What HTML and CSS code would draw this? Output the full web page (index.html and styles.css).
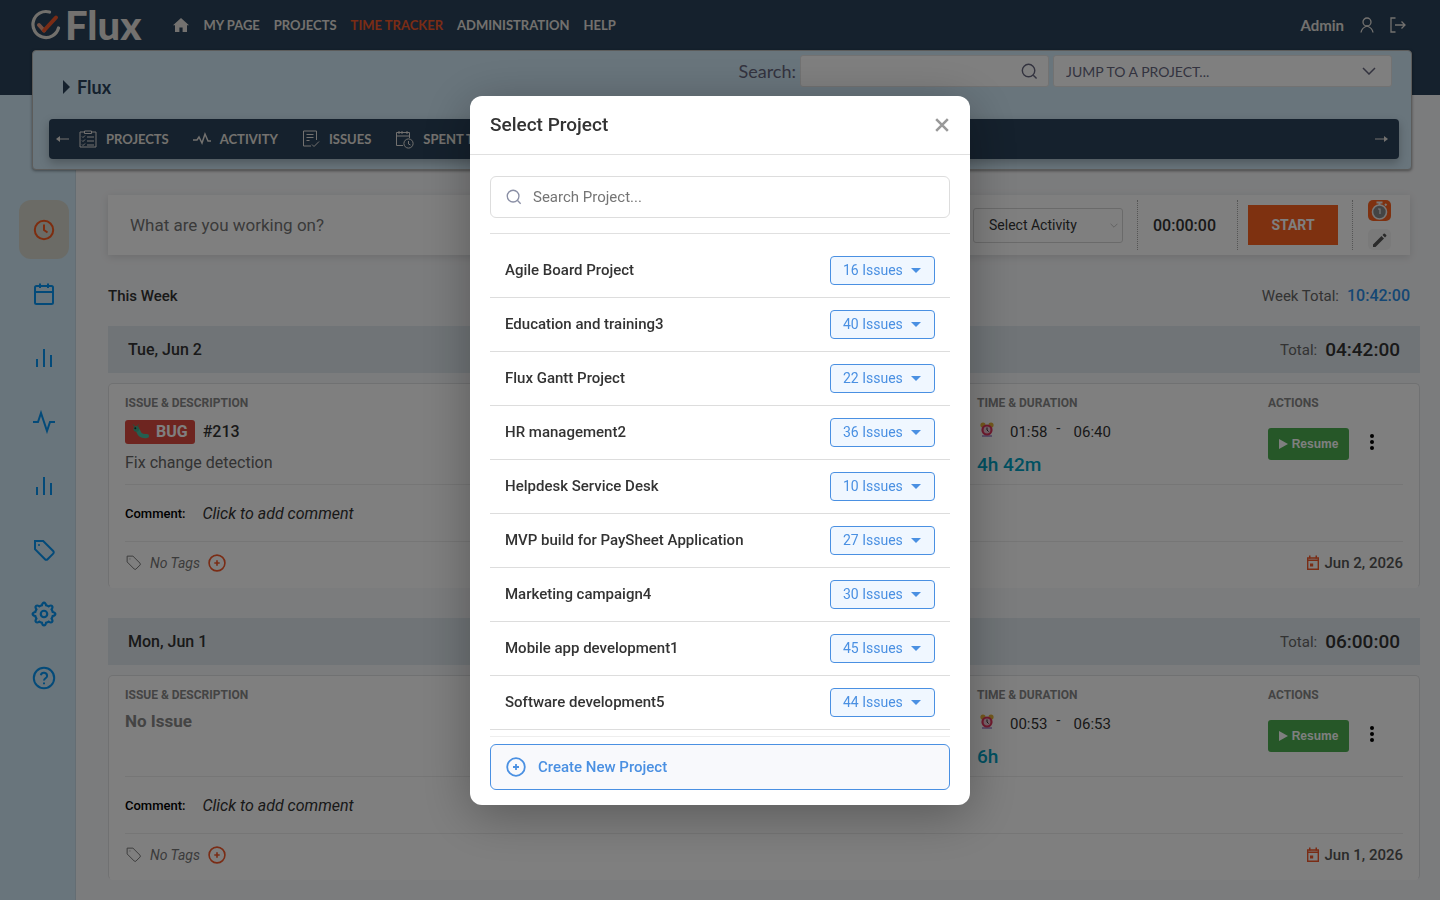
FILE: index.html
```html
<!DOCTYPE html>
<html lang="en">

<head>
  <meta charset="utf-8">
  <meta name="viewport" content="width=device-width, initial-scale=1">
  <title>Time Tracker - Flux</title>
  <link rel="stylesheet" href="styles.css">
</head>

<body>
  <!-- shared icons -->
  <svg class="sprite" aria-hidden="true">
    <symbol id="i-search" viewBox="0 0 18 18"><circle cx="8" cy="8" r="6.6"/><path d="M13 13l3.5 3.5"/></symbol>
    <symbol id="i-chevron" viewBox="0 0 14 8"><path d="M1 1l6 6 6-6"/></symbol>
    <symbol id="i-bars" viewBox="0 0 24 24"><path d="M19 21V9M12 21V3M5 21v-8"/></symbol>
    <symbol id="i-tag" viewBox="0 0 24 24"><path d="M3 3h8.2l10 10a1.8 1.8 0 0 1 0 2.6l-5.6 5.6a1.8 1.8 0 0 1-2.6 0L3 11.200z"/><path d="M7 7h.01" stroke-linecap="round"/></symbol>
    <symbol id="i-plus" viewBox="0 0 20 20"><circle cx="10" cy="10" r="8.800"/><path d="M10 7v6M7 10h6"/></symbol>
    <symbol id="i-date" viewBox="0 0 14 16"><path d="M1.700 3h10.600v11.300H1.700z" fill="none" stroke="currentColor" stroke-width="1.400"/><path d="M1 4.500h12v1.500H1zM3 .5h1.500v3H3zM9.500.5H11v3H9.500zM4 8.500h3.200v3H4z"/></symbol>
    <symbol id="i-alarm" viewBox="0 0 14 16">
      <path d="M2 13h10v2H2z" fill="#b9a3d8"/>
      <circle cx="3" cy="3" r="2.600" fill="#e8b33a"/><circle cx="11" cy="3" r="2.600" fill="#e8b33a"/>
      <circle cx="7" cy="8" r="5.600" fill="#e2365f"/><circle cx="7" cy="8" r="3.400" fill="#f3c9d8"/>
      <path d="M7 5.500V8l1.600 1.600" fill="none" stroke="#333" stroke-width="1"/>
    </symbol>
    <symbol id="i-bug" viewBox="0 0 18 16">
      <path d="M4 5C7 5.500 6 9 8.500 10.800s4.500 1.200 6.500 1.200" fill="none" stroke="#48bfa0" stroke-width="4.200" stroke-linecap="round"/>
      <circle cx="4.300" cy="4.800" r="2.900" fill="#3cae8c"/><circle cx="3.300" cy="4.300" r="1" fill="#20302a"/>
      <path d="M2.500 2.500L1.200.5M5.500 2L6.500.5" stroke="#38a87c" stroke-width="1"/>
    </symbol>
  </svg>

  <header class="topbar">
    <a class="logo" href="#">
      <svg width="30" height="32" viewBox="0 0 30 32" fill="none" stroke-linecap="round">
        <path d="M18.500 3A13 13 0 1 0 27.500 19" stroke="#e4e0d9" stroke-width="3.200"/>
        <path d="M8 16l5 5.500" stroke="#e9a087" stroke-width="4"/>
        <path d="M13 21.500L25 8.500" stroke="#f4592a" stroke-width="4"/>
      </svg>
      <span>Flux</span>
    </a>
    <nav class="main-nav">
      <a class="home" href="#" aria-label="Home"><svg width="16" height="14" viewBox="0 0 16 14"><path d="M8 0l8 7.200h-2V14H9.600V9.500H6.400V14H2V7.200H0z" fill="currentColor"/></svg></a>
      <a href="#">MY PAGE</a>
      <a href="#">PROJECTS</a>
      <a class="active" href="#">TIME TRACKER</a>
      <a href="#">ADMINISTRATION</a>
      <a href="#">HELP</a>
    </nav>
    <div class="account">
      <a href="#">Admin</a>
      <a class="icon" href="#" aria-label="My account"><svg width="14" height="16" viewBox="0 0 14 16"><circle cx="7" cy="5" r="4"/><path d="M1 15.500c.5-3.500 3-5.500 6-6.500 3 1 5.500 3 6 6.500"/></svg></a>
      <a class="icon" href="#" aria-label="Sign out"><svg width="16" height="16" viewBox="0 0 16 16"><path d="M5.500 1H1v14h4.500M5 8h10M11.500 4.500L15 8l-3.500 3.500"/></svg></a>
    </div>
  </header>

  <section class="panel">
    <div class="panel-head">
      <h1><span class="caret-right"></span>Flux</h1>
      <form class="quick">
        <label for="q">Search:</label>
        <div class="quick-box search-box">
          <input type="text" id="q">
          <svg width="17" height="17"><use href="#i-search"/></svg>
        </div>
        <div class="quick-box jump-box">
          <select aria-label="Jump to a project">
            <option>JUMP TO A PROJECT...</option>
          </select>
          <svg width="14" height="8"><use href="#i-chevron"/></svg>
        </div>
      </form>
    </div>
    <nav class="sub-nav">
      <button type="button" class="arrow" aria-label="Previous"><svg width="13" height="8" viewBox="0 0 13 8"><path d="M2 4h11"/><path d="M0 4l4-3v6z" class="fill"/></svg></button>
      <a href="#"><svg width="18" height="18" viewBox="0 0 18 18"><path d="M5 2H1v15h16V2h-4M5.500 1h7v2.500h-7zM3 6.500l1 1 2-2M3 10.500l1 1 2-2M3 14.500l1 1 2-2M8 7h7M8 11h7M8 15h7"/></svg>PROJECTS</a>
      <a href="#"><svg width="18" height="18" viewBox="0 0 18 18"><path d="M0 10h4l2-3 3 6 3-9 3 7h3" stroke-width="1.500"/></svg>ACTIVITY</a>
      <a href="#"><svg width="18" height="18" viewBox="0 0 18 18"><path d="M9 16H1.500V1h13v9M4.500 4.500h7M4.500 7.500h7M4.500 10.500h3M10 14.500l2 2 5-5"/></svg>ISSUES</a>
      <a href="#"><svg width="19" height="19" viewBox="0 0 19 19"><path d="M8 15.500H1.500V2.500h13V8M1.500 6h13M4 1v3M7 1v3M12 1v3"/><circle cx="13.500" cy="13.500" r="4.600"/><path d="M13.500 11v3l2 1"/></svg>SPENT TIME</a>
      <button type="button" class="arrow next" aria-label="Next"><svg width="13" height="8" viewBox="0 0 13 8"><path d="M0 4h11"/><path d="M13 4L9 1v6z" class="fill"/></svg></button>
    </nav>
  </section>

  <div class="shell">
    <aside class="sidebar">
      <a class="active" href="#" aria-label="Timer"><svg width="24" height="24" viewBox="0 0 24 24"><circle cx="12" cy="12" r="9.200"/><path d="M12 6.500V12l3.500 2.500"/></svg></a>
      <a href="#" aria-label="Calendar"><svg width="24" height="24" viewBox="0 0 24 24"><rect x="3" y="4" width="18" height="18" rx="1.500"/><path d="M8 1.500V6M16 1.500V6M3 10h18"/></svg></a>
      <a href="#" aria-label="Reports"><svg width="24" height="24"><use href="#i-bars"/></svg></a>
      <a href="#" aria-label="Activity"><svg width="24" height="24" viewBox="0 0 24 24"><path d="M1 12h5L9 3l6 18 3-9h5"/></svg></a>
      <a href="#" aria-label="Statistics"><svg width="24" height="24"><use href="#i-bars"/></svg></a>
      <a href="#" aria-label="Tags"><svg width="24" height="24"><use href="#i-tag"/></svg></a>
      <a href="#" aria-label="Settings"><svg width="26" height="26" viewBox="0 0 24 24"><circle cx="12" cy="12" r="3"/><path d="M12 1.500c1.300 0 1.600 1 1.900 2.500 1.300.4 1.700.6 2.400 1 1.300-.9 2.300-1.200 3.100-.4s.5 1.800-.4 3.100c.4.700.6 1.100 1 2.400 1.500.3 2.500.6 2.500 1.900s-1 1.600-2.500 1.900c-.4 1.300-.6 1.700-1 2.400.9 1.300 1.200 2.300.4 3.100s-1.800.5-3.100-.4c-.7.400-1.100.6-2.400 1-.3 1.500-.6 2.500-1.900 2.500s-1.600-1-1.900-2.500c-1.300-.4-1.700-.6-2.400-1-1.300.9-2.300 1.200-3.100.4s-.5-1.800.4-3.100c-.4-.7-.6-1.100-1-2.400-1.500-.3-2.500-.6-2.500-1.900s1-1.600 2.500-1.900c.4-1.300.6-1.700 1-2.400-.9-1.300-1.200-2.300-.4-3.100s1.800-.5 3.100.4c.7-.4 1.100-.6 2.400-1 .3-1.500.6-2.500 1.900-2.500z"/></svg></a>
      <a href="#" aria-label="Help"><svg width="24" height="24" viewBox="0 0 24 24"><circle cx="12" cy="12" r="10.200"/><path d="M8.800 9.200a3.200 3.200 0 0 1 6.300.8c0 2.200-3.100 2.400-3.100 4.500M12 16.500v1.800"/></svg></a>
    </aside>

    <main class="content">
      <form class="tracker">
        <input type="text" class="task" placeholder="What are you working on?" aria-label="What are you working on?">
        <div class="activity">
          <select aria-label="Activity">
            <option>Select Activity</option>
          </select>
          <svg width="8" height="5"><use href="#i-chevron"/></svg>
        </div>
        <div class="clock">00:00:00</div>
        <div class="start"><button type="button">START</button></div>
        <div class="modes">
          <button type="button" class="on" aria-label="Timer mode"><svg width="19" height="19" viewBox="0 0 19 19"><path d="M6.500 1.500h6M9.500 1.500v3M15 4.500l1.500-1.500" stroke="#eee" stroke-width="2"/><circle cx="9.500" cy="11" r="7" fill="#888" stroke="#eee" stroke-width="1.600"/><path d="M8 8h2v5" stroke="#eee" stroke-width="1.200"/></svg></button>
          <button type="button" aria-label="Manual mode"><svg width="16" height="16" viewBox="0 0 16 16"><path d="M1 15v-2.500l8.500-8.500 2.500 2.500L3.500 15zM10.500 3l1.200-1.200q.6-.6 1.200 0l1.300 1.300q.6.600 0 1.200L13 5.500z" fill="#555"/></svg></button>
        </div>
      </form>

      <div class="week">
        <h2>This Week</h2>
        <p>Week Total: <b>10:42:00</b></p>
      </div>

      <section class="day">
        <div class="day-head">
          <h3>Tue, Jun 2</h3>
          <p>Total: <b>04:42:00</b></p>
        </div>
        <article class="entry">
          <div class="entry-main">
            <div>
              <h4>ISSUE &amp; DESCRIPTION</h4>
              <p class="issue"><span class="badge"><svg width="18" height="16"><use href="#i-bug"/></svg>BUG</span>#213</p>
              <p class="desc">Fix change detection</p>
            </div>
            <div>
              <h4>TIME &amp; DURATION</h4>
              <p class="times"><svg width="14" height="16"><use href="#i-alarm"/></svg><span>01:58</span><i>-</i><span>06:40</span></p>
              <p class="duration">4h 42m</p>
            </div>
            <div>
              <h4>ACTIONS</h4>
              <div class="actions">
                <button type="button" class="resume"><span class="play"></span>Resume</button>
                <button type="button" class="more" aria-label="More"><svg width="6" height="18" viewBox="0 0 6 18"><circle cx="3" cy="3" r="2"/><circle cx="3" cy="9" r="2"/><circle cx="3" cy="15" r="2"/></svg></button>
              </div>
            </div>
          </div>
          <div class="comment"><b>Comment:</b><em>Click to add comment</em></div>
          <div class="entry-foot">
            <svg class="tag" width="17" height="17"><use href="#i-tag"/></svg>
            <em>No Tags</em>
            <button type="button" class="add-tag" aria-label="Add tag"><svg width="18" height="18"><use href="#i-plus"/></svg></button>
            <span class="date"><svg width="14" height="16"><use href="#i-date"/></svg>Jun 2, 2026</span>
          </div>
        </article>
      </section>

      <section class="day">
        <div class="day-head">
          <h3>Mon, Jun 1</h3>
          <p>Total: <b>06:00:00</b></p>
        </div>
        <article class="entry">
          <div class="entry-main">
            <div>
              <h4>ISSUE &amp; DESCRIPTION</h4>
              <p class="no-issue">No Issue</p>
            </div>
            <div>
              <h4>TIME &amp; DURATION</h4>
              <p class="times"><svg width="14" height="16"><use href="#i-alarm"/></svg><span>00:53</span><i>-</i><span>06:53</span></p>
              <p class="duration">6h</p>
            </div>
            <div>
              <h4>ACTIONS</h4>
              <div class="actions">
                <button type="button" class="resume"><span class="play"></span>Resume</button>
                <button type="button" class="more" aria-label="More"><svg width="6" height="18" viewBox="0 0 6 18"><circle cx="3" cy="3" r="2"/><circle cx="3" cy="9" r="2"/><circle cx="3" cy="15" r="2"/></svg></button>
              </div>
            </div>
          </div>
          <div class="comment"><b>Comment:</b><em>Click to add comment</em></div>
          <div class="entry-foot">
            <svg class="tag" width="17" height="17"><use href="#i-tag"/></svg>
            <em>No Tags</em>
            <button type="button" class="add-tag" aria-label="Add tag"><svg width="18" height="18"><use href="#i-plus"/></svg></button>
            <span class="date"><svg width="14" height="16"><use href="#i-date"/></svg>Jun 1, 2026</span>
          </div>
        </article>
      </section>
    </main>
  </div>

  <!-- project picker -->
  <div class="overlay">
    <div class="modal" role="dialog" aria-labelledby="modal-title">
      <div class="modal-head">
        <h2 id="modal-title">Select Project</h2>
        <button type="button" class="close" aria-label="Close"><svg width="14" height="14" viewBox="0 0 12 12"><path d="M1 1l10 10M11 1L1 11"/></svg></button>
      </div>
      <div class="modal-body">
        <div class="project-search">
          <svg width="16" height="16"><use href="#i-search"/></svg>
          <input type="text" placeholder="Search Project..." aria-label="Search Project">
        </div>
        <ul class="projects">
          <li><span>Agile Board Project</span><button type="button">16 Issues</button></li>
          <li><span>Education and training3</span><button type="button">40 Issues</button></li>
          <li><span>Flux Gantt Project</span><button type="button">22 Issues</button></li>
          <li><span>HR management2</span><button type="button">36 Issues</button></li>
          <li><span>Helpdesk Service Desk</span><button type="button">10 Issues</button></li>
          <li><span>MVP build for PaySheet Application</span><button type="button">27 Issues</button></li>
          <li><span>Marketing campaign4</span><button type="button">30 Issues</button></li>
          <li><span>Mobile app development1</span><button type="button">45 Issues</button></li>
          <li><span>Software development5</span><button type="button">44 Issues</button></li>
        </ul>
        <div class="modal-foot">
          <button type="button" class="create"><svg width="20" height="20"><use href="#i-plus"/></svg>Create New Project</button>
        </div>
      </div>
    </div>
  </div>
</body>

</html>
```

FILE: styles.css
```css
* {
  box-sizing: border-box;
}

body {
  margin: 0;
  background-color: #f7f8fa;
  color: #333;
  font-family: Roboto, sans-serif;
  font-size: 15px;
}

h1, h2, h3, h4, p, ul {
  margin: 0;
  padding: 0;
  font-weight: 500;
}

a {
  color: inherit;
  text-decoration: none;
}

button, input, select {
  font-family: inherit;
  font-size: inherit;
  color: inherit;
  margin: 0;
  padding: 0;
  border: none;
  background: none;
  outline: none;
}

button {
  cursor: pointer;
}

select {
  appearance: none;
}

svg {
  flex: none;
  display: block;
}

.sprite {
  position: absolute;
  width: 0;
  height: 0;
}

/* top bar */
.topbar {
  display: flex;
  align-items: flex-start;
  height: 95px;
  padding: 0 34px 0 31px;
  background-color: #2a425a;
  color: #e6e3de;
  font-family: Lato, sans-serif;
}

.logo,
.main-nav,
.account {
  display: flex;
  align-items: center;
  height: 50px;
}

.logo {
  gap: 4px;
  font-size: 40px;
  font-weight: 900;
  line-height: 50px;
}

.main-nav {
  gap: 14px;
  margin-left: 32px;
  font-size: 13px;
  font-weight: 700;
}

.main-nav .active {
  color: #f4592a;
}

.account {
  gap: 16px;
  margin-left: auto;
  font-size: 15px;
  font-weight: 700;
}

.account svg {
  fill: none;
  stroke: currentColor;
  stroke-width: 1.3;
}

/* project panel */
.panel {
  position: relative;
  z-index: 1;
  margin: -45px 28px 0 32px;
  padding: 4px 12px 10px 16px;
  border: 1px solid #b9b9b7;
  border-radius: 4px;
  background-color: #d2eaf8;
  box-shadow: 0 1px 3px rgba(0, 0, 0, 0.4);
  font-family: Lato, sans-serif;
}

.panel-head {
  display: flex;
  justify-content: space-between;
  height: 64px;
  padding: 0 7px 0 14px;
}

.panel h1 {
  display: flex;
  align-items: center;
  gap: 7px;
  height: 64px;
  color: #2a425a;
  font-size: 18px;
  font-weight: 700;
}

.caret-right {
  border-left: 7px solid #2a425a;
  border-top: 7px solid transparent;
  border-bottom: 7px solid transparent;
}

.quick {
  display: flex;
  gap: 4px;
  height: 32px;
  align-items: center;
  color: #67677f;
}

.quick label {
  font-size: 18px;
}

.quick-box {
  display: flex;
  align-items: center;
  height: 32px;
  border: 1px solid #e4e4e4;
  border-radius: 3px;
  background-color: #fff;
}

.quick-box svg,
.activity svg,
.project-search svg {
  fill: none;
  stroke: currentColor;
  stroke-width: 1.5;
}

.quick-box input,
.quick-box select {
  flex: 1;
  min-width: 0;
  height: 30px;
}

.search-box {
  width: 249px;
  padding: 0 10px;
}

.jump-box {
  width: 339px;
  padding: 0 15px 0 12px;
  font-size: 14px;
}

.sub-nav {
  display: flex;
  align-items: center;
  height: 40px;
  padding: 0 11px 0 7px;
  border-radius: 4px;
  background-color: #2a425a;
  box-shadow: 0 4px 10px rgba(0, 0, 0, 0.25);
  color: #e6e3de;
  font-size: 13px;
  font-weight: 700;
}

.sub-nav a {
  display: flex;
  align-items: center;
  gap: 9px;
  margin-right: 24px;
}

.sub-nav svg {
  fill: none;
  stroke: currentColor;
}

.sub-nav .fill {
  fill: currentColor;
  stroke: none;
}

.arrow {
  margin-right: 10px;
}

.arrow.next {
  margin: 0 0 0 auto;
}

/* page */
.shell {
  display: flex;
  min-height: calc(100vh - 95px);
  margin-top: -75px;
}

.sidebar {
  display: flex;
  flex-direction: column;
  gap: 5px;
  width: 76px;
  padding: 105px 6px 0 19px;
  border-right: 1px solid #c9dbe6;
  background-color: #d2eaf8;
  color: #0694f2;
}

.sidebar a {
  display: flex;
  align-items: center;
  justify-content: center;
  width: 50px;
  height: 59px;
  border-radius: 12px;
}

.sidebar .active {
  background-color: #d6d7cd;
  color: #fa5a1e;
}

.sidebar svg {
  fill: none;
  stroke: currentColor;
  stroke-width: 2;
}

.content {
  flex: 1;
  padding: 100px 20px 20px 32px;
}

.tracker {
  display: flex;
  align-items: center;
  height: 60px;
  margin-right: 10px;
  padding-left: 22px;
  background-color: #fff;
  box-shadow: 0 2px 8px rgba(0, 0, 0, 0.12);
}

.task {
  flex: 1;
  height: 40px;
  font-size: 17px;
}

.task::placeholder {
  color: #757575;
}

.activity {
  display: flex;
  align-items: center;
  width: 150px;
  height: 35px;
  margin-right: 14px;
  padding: 0 4px 0 15px;
  border: 1px solid #d5d5d5;
  border-radius: 3px;
  color: #bbb;
}

.activity select {
  flex: 1;
  height: 33px;
  color: #333;
  font-size: 14px;
}

.clock,
.start,
.modes {
  display: flex;
  height: 50px;
  align-items: center;
  border-left: 1px dotted #aaa;
}

.clock {
  width: 100px;
  padding-left: 15px;
  font-size: 16px;
  font-weight: 500;
}

.start {
  width: 115px;
  padding-left: 10px;
}

.start button {
  width: 90px;
  height: 40px;
  background-color: #fd6321;
  color: #fff;
  font-size: 14px;
  font-weight: 700;
}

.modes {
  flex-direction: column;
  align-items: flex-start;
  justify-content: space-between;
  width: 58px;
  padding-left: 15px;
}

.modes button {
  display: flex;
  align-items: center;
  justify-content: center;
  width: 23px;
  height: 21px;
  border-radius: 5px;
  background-color: #f5f5f5;
}

.modes .on {
  background-color: #fd6321;
}

.modes svg {
  fill: none;
}

.week {
  display: flex;
  align-items: center;
  justify-content: space-between;
  height: 71px;
  margin-right: 10px;
  padding-top: 10px;
}

.week h2 {
  font-size: 15px;
}

.week p,
.day-head p {
  display: flex;
  align-items: center;
  gap: 8px;
  color: #666;
  font-weight: 400;
}

.week b {
  color: #2b8fe8;
  font-size: 16px;
  font-weight: 500;
}

.day {
  margin-bottom: 30px;
}

.day:last-child {
  margin-bottom: 0;
}

.day-head {
  display: flex;
  align-items: center;
  justify-content: space-between;
  height: 47px;
  margin-bottom: 10px;
  padding: 0 20px;
  background-color: #e0e9ef;
}

.day-head h3 {
  font-size: 16px;
}

.day-head b {
  color: #333;
  font-size: 19px;
  font-weight: 500;
}

.entry {
  padding: 0 16px;
  border: 1px solid #e0e2e4;
  border-bottom-color: #fff;
  border-radius: 5px;
  background-color: #fff;
}

.entry-main {
  display: grid;
  grid-template-columns: minmax(0, 1fr) 291px 135px;
  height: 101px;
  padding-top: 11px;
  border-bottom: 1px solid #ececec;
}

.entry h4 {
  color: #888;
  font-size: 12px;
  font-weight: 700;
  line-height: 16px;
}

.issue {
  display: flex;
  align-items: center;
  gap: 8px;
  margin-top: 9px;
  color: #333;
  font-size: 16px;
  line-height: 24px;
}

.badge {
  display: flex;
  align-items: center;
  gap: 6px;
  padding: 0 7px;
  border-radius: 3px;
  background-color: #dd4a40;
  color: #fff;
  font-weight: 700;
}

.desc {
  margin-top: 9px;
  color: #666;
  font-size: 16px;
  font-weight: 400;
  line-height: 20px;
}

.no-issue {
  margin-top: 8px;
  color: #888;
  font-size: 17px;
  font-weight: 700;
  line-height: 20px;
}

.times {
  display: flex;
  align-items: center;
  gap: 13px;
  margin-top: 9px;
  color: #333;
  font-weight: 400;
  line-height: 24px;
}

.times svg {
  margin: 0 3px 4px;
}

.times i {
  margin-left: -4px;
  padding-bottom: 8px;
  line-height: 16px;
  font-style: normal;
}

.duration {
  margin-top: 9px;
  color: #00a2c4;
  font-size: 19px;
  line-height: 24px;
}

.actions {
  display: flex;
  align-items: center;
  gap: 20px;
  margin-top: 17px;
}

.more {
  padding-bottom: 4px;
}

.resume {
  display: flex;
  align-items: center;
  justify-content: center;
  gap: 4px;
  width: 81px;
  height: 32px;
  border-radius: 3px;
  background-color: #4caf50;
  color: #fff;
  font-family: "Liberation Sans", sans-serif;
  font-size: 12px;
  font-weight: 700;
}

.play {
  border-left: 9px solid #fff;
  border-top: 5px solid transparent;
  border-bottom: 5px solid transparent;
}

.comment {
  display: flex;
  align-items: center;
  gap: 17px;
  height: 57px;
  border-bottom: 1px solid #ececec;
  font-size: 16px;
}

.comment b {
  color: #000;
  font-size: 13px;
  font-weight: 500;
}

.entry-foot {
  display: flex;
  align-items: center;
  gap: 8px;
  height: 45px;
  padding-bottom: 4px;
  color: #777;
  font-size: 14px;
}

.tag {
  fill: none;
  stroke: #777;
  stroke-width: 1.4;
}

.add-tag {
  color: #f4592a;
}

.add-tag svg,
.create svg {
  fill: none;
  stroke: currentColor;
  stroke-width: 1.8;
}

.date {
  display: flex;
  align-items: center;
  gap: 5px;
  margin-left: auto;
  color: #555;
  font-size: 15px;
  font-weight: 500;
}

.date svg {
  color: #f4592a;
  fill: currentColor;
}

/* modal */
.overlay {
  position: fixed;
  inset: 0;
  z-index: 10;
  display: flex;
  align-items: center;
  justify-content: center;
  background-color: rgba(0, 0, 0, 0.5);
}

.modal {
  width: 500px;
  border-radius: 12px;
  background-color: #fff;
  box-shadow: 0 10px 50px rgba(0, 0, 0, 0.3);
}

.modal-head {
  display: flex;
  align-items: center;
  justify-content: space-between;
  height: 59px;
  padding: 0 21px 0 20px;
  border-bottom: 1px solid #e0e0e0;
}

.modal-head h2 {
  font-size: 19px;
}

.close svg {
  stroke: #999;
  stroke-width: 2.2;
}

.modal-body {
  padding: 21px 20px 15px;
}

.project-search {
  display: flex;
  align-items: center;
  gap: 11px;
  height: 42px;
  margin-bottom: 15px;
  padding: 0 15px;
  border: 1px solid #ddd;
  border-radius: 6px;
  color: #8a8fa5;
}

.project-search input {
  flex: 1;
  height: 38px;
  font-size: 15px;
}

.project-search input::placeholder {
  color: #757575;
}

.projects {
  padding: 10px 0 6px;
  border-top: 1px solid #e0e0e0;
  list-style: none;
}

.projects li {
  display: flex;
  align-items: center;
  justify-content: space-between;
  height: 54px;
  padding: 0 15px;
  border-bottom: 1px solid #ddd;
  font-weight: 500;
}

.projects button {
  display: flex;
  align-items: center;
  justify-content: space-between;
  width: 105px;
  height: 29px;
  padding: 0 13px 0 12px;
  border: 1px solid #4a90e2;
  border-radius: 4px;
  background-color: #f0f7ff;
  color: #4a90e2;
  font-size: 14px;
}

.projects button::after {
  content: "";
  border-top: 5px solid #4a90e2;
  border-left: 5px solid transparent;
  border-right: 5px solid transparent;
}

.modal-foot {
  padding-top: 7px;
  border-top: 1px solid #eee;
}

.create {
  display: flex;
  align-items: center;
  gap: 12px;
  width: 100%;
  height: 46px;
  padding: 0 15px;
  border: 1px solid #4a90e2;
  border-radius: 6px;
  background-color: #f8f9fc;
  color: #4a90e2;
  font-size: 15px;
  font-weight: 500;
}
```
